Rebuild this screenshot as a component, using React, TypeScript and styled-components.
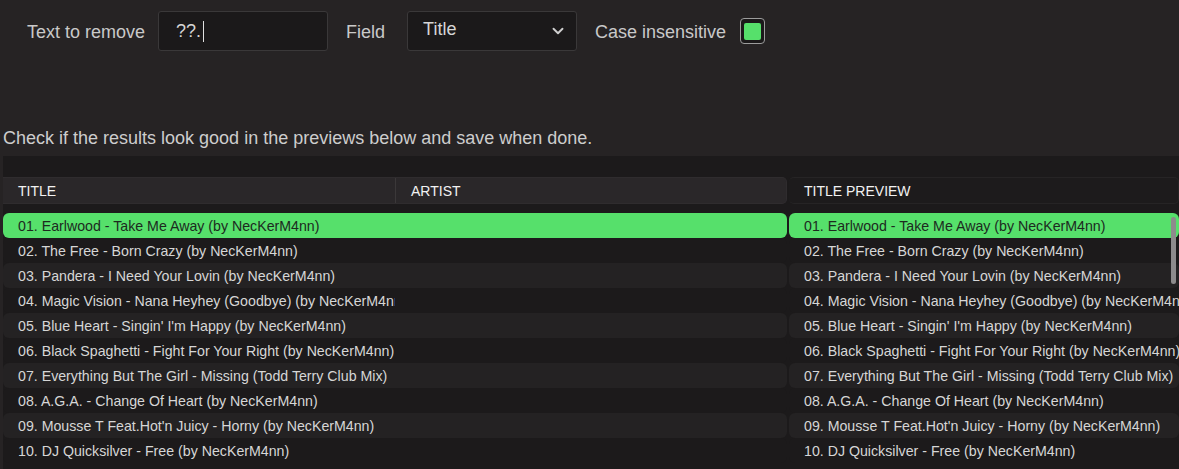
import styled, { createGlobalStyle } from 'styled-components';
import { ChevronDown } from 'lucide-react';

const GlobalStyle = createGlobalStyle`
  html, body {
    margin: 0;
    padding: 0;
    background: #262324;
    font-family: 'Liberation Sans', Arial, sans-serif;
    overflow: hidden;
  }
`;

const Page = styled.div`
  width: 1179px;
  height: 469px;
  padding-top: 11px;
  box-sizing: border-box;
  overflow: hidden;
`;

const Toolbar = styled.div`
  display: flex;
  align-items: center;
  height: 40px;
  padding-left: 27px;
`;

const Label = styled.span<{ gap: number }>`
  font-size: 18px;
  color: #c9c9c9;
  margin-right: ${(p) => p.gap}px;
  white-space: nowrap;
  padding-top: 2px;
`;

const Field = styled.div`
  box-sizing: border-box;
  width: 170px;
  height: 40px;
  background: #1b191a;
  border: 1px solid #3a3839;
  border-radius: 3px;
  display: flex;
  align-items: center;
  justify-content: space-between;
  margin-right: 18px;
  color: #d6d6d6;
  font-size: 18px;
`;

const InputText = styled.span`
  padding-left: 17px;
  display: flex;
  align-items: center;
`;

const Caret = styled.span`
  display: inline-block;
  width: 1px;
  height: 21px;
  margin-left: 2px;
  background: #e0e0e0;
`;

const SelectText = styled.span`
  padding-left: 15px;
  margin-top: -3px;
`;

const Chevron = styled.span`
  display: flex;
  padding-right: 9px;
  color: #cfcfcf;
`;

const Checkbox = styled.div`
  box-sizing: border-box;
  width: 25px;
  height: 26px;
  border: 1px solid #9c9c9c;
  border-radius: 4px;
  background: #1b191a;
  display: flex;
  align-items: center;
  justify-content: center;
`;

const CheckMark = styled.div`
  width: 17px;
  height: 17px;
  border-radius: 2px;
  background: #56e06b;
`;

const Hint = styled.p`
  margin: 77px 0 0 3px;
  font-size: 18px;
  line-height: 20px;
  color: #cdcdcd;
`;

const TableArea = styled.div`
  margin: 8px 0 0 3px;
  background: #1c1a1b;
  padding-top: 21px;
  height: 320px;
  display: flex;
  gap: 2px;
`;

const Table = styled.div<{ width: number }>`
  width: ${(p) => p.width}px;
  flex-shrink: 0;
  position: relative;
  overflow: hidden;
`;

const HeaderRow = styled.div<{ raised: boolean }>`
  display: flex;
  height: 27px;
  margin-bottom: 9px;
  border-radius: ${(p) => (p.raised ? '0 5px 5px 0' : '5px')};
  background: ${(p) => (p.raised ? '#2a2729' : '#1d1b1c')};
  border: 1px solid ${(p) => (p.raised ? '#2f2c2e' : '#262425')};
  border-left: none;
  box-sizing: border-box;
`;

const HeaderCell = styled.div<{ width?: number; divider?: boolean }>`
  ${(p) => (p.width ? `width: ${p.width}px;` : 'flex: 1;')}
  flex-shrink: 0;
  display: flex;
  align-items: center;
  padding-left: 15px;
  box-sizing: border-box;
  font-size: 14px;
  color: #f2f2f2;
  border-right: ${(p) => (p.divider ? '1px solid #3b3839' : 'none')};
`;

const Row = styled.div<{ selected: boolean; odd: boolean }>`
  display: flex;
  height: 25px;
  align-items: center;
  border-radius: 6px;
  background: ${(p) => (p.selected ? '#56e06b' : p.odd ? '#242223' : '#1c1a1b')};
  color: ${(p) => (p.selected ? '#1d2a1f' : '#d6d6d6')};
  font-size: 14.2px;
`;

const Cell = styled.div<{ width?: number }>`
  ${(p) => (p.width ? `width: ${p.width}px;` : 'flex: 1;')}
  flex-shrink: 0;
  padding-left: 15px;
  box-sizing: border-box;
  white-space: nowrap;
  overflow: hidden;
`;

const Scrollbar = styled.div`
  position: absolute;
  top: 40px;
  right: 3px;
  width: 5px;
  height: 67px;
  border-radius: 3px;
  background: #8d8b8c;
`;

const titles = [
  '01. Earlwood - Take Me Away (by NecKerM4nn)',
  '02. The Free - Born Crazy (by NecKerM4nn)',
  '03. Pandera - I Need Your Lovin (by NecKerM4nn)',
  '04. Magic Vision - Nana Heyhey (Goodbye) (by NecKerM4nn)',
  '05. Blue Heart - Singin\' I\'m Happy (by NecKerM4nn)',
  '06. Black Spaghetti - Fight For Your Right (by NecKerM4nn)',
  '07. Everything But The Girl - Missing (Todd Terry Club Mix)',
  '08. A.G.A. - Change Of Heart (by NecKerM4nn)',
  '09. Mousse T Feat.Hot\'n Juicy - Horny (by NecKerM4nn)',
  '10. DJ Quicksilver - Free (by NecKerM4nn)',
];

export default function App() {
  return (
    <Page>
      <GlobalStyle />
      <Toolbar>
        <Label gap={13}>Text to remove</Label>
        <Field>
          <InputText>
            ??.<Caret />
          </InputText>
        </Field>
        <Label gap={22}>Field</Label>
        <Field>
          <SelectText>Title</SelectText>
          <Chevron>
            <ChevronDown size={18} strokeWidth={2.5} />
          </Chevron>
        </Field>
        <Label gap={14}>Case insensitive</Label>
        <Checkbox>
          <CheckMark />
        </Checkbox>
      </Toolbar>

      <Hint>Check if the results look good in the previews below and save when done.</Hint>

      <TableArea>
        <Table width={784}>
          <HeaderRow raised>
            <HeaderCell width={393} divider>
              TITLE
            </HeaderCell>
            <HeaderCell>ARTIST</HeaderCell>
          </HeaderRow>
          {titles.map((t, i) => (
            <Row key={t} selected={i === 0} odd={i % 2 === 0}>
              <Cell width={392}>{t}</Cell>
              <Cell />
            </Row>
          ))}
        </Table>
        <Table width={390}>
          <HeaderRow raised={false}>
            <HeaderCell>TITLE PREVIEW</HeaderCell>
          </HeaderRow>
          {titles.map((t, i) => (
            <Row key={t} selected={i === 0} odd={i % 2 === 0}>
              <Cell>{t}</Cell>
            </Row>
          ))}
          <Scrollbar />
        </Table>
      </TableArea>
    </Page>
  );
}
